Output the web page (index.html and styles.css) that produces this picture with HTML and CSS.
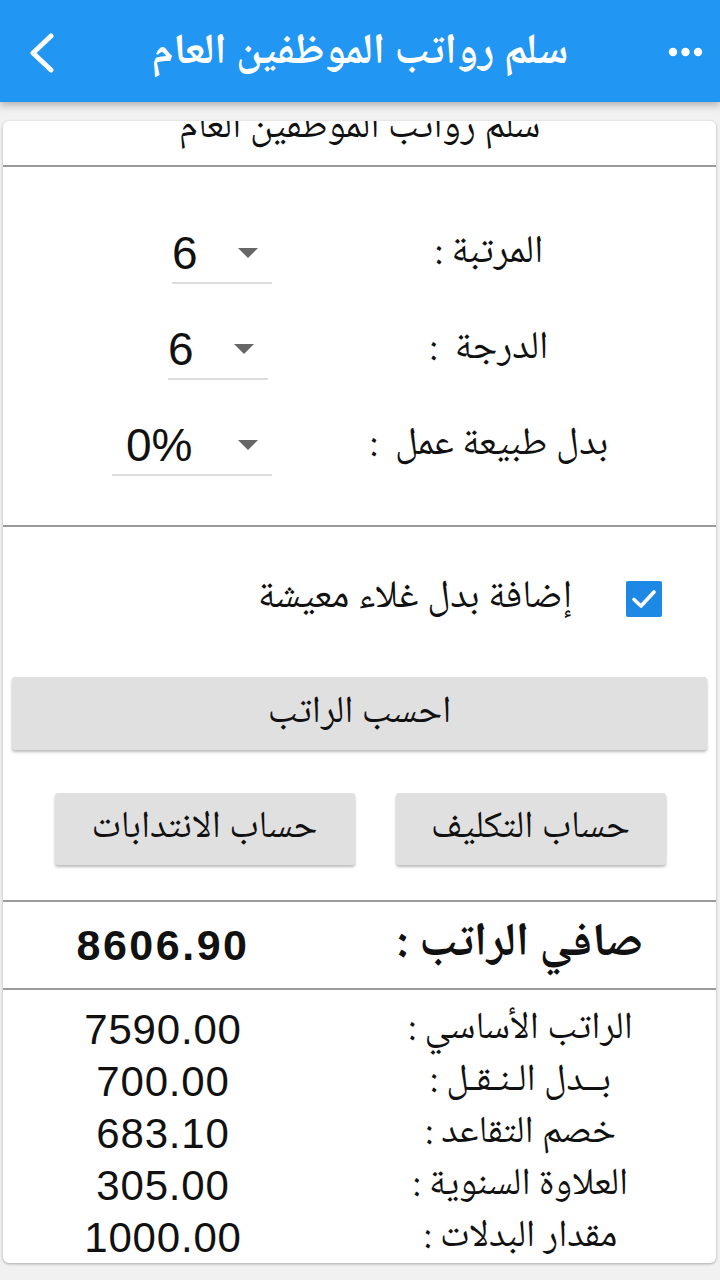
FILE: index.html
```html
<!DOCTYPE html>
<html lang="ar">
<head>
<meta charset="utf-8">
<title>سلم رواتب الموظفين العام</title>
<link rel="stylesheet" href="styles.css">
</head>
<body>
<header class="appbar">
  <div class="bar-start">
    <svg class="back" width="30" height="40" viewBox="0 0 30 40"><path d="M23 3 L5 20 L23 37" fill="none" stroke="#fff" stroke-width="5" stroke-linecap="round" stroke-linejoin="round"/></svg>
  </div>
  <h1 class="title" dir="rtl">سلم رواتب الموظفين العام</h1>
  <div class="bar-end">
    <svg class="more" width="36" height="10" viewBox="0 0 36 10"><circle cx="5" cy="5" r="4.2" fill="#fff"/><circle cx="17.5" cy="5" r="4.2" fill="#fff"/><circle cx="30" cy="5" r="4.2" fill="#fff"/></svg>
  </div>
</header>

<main class="card">
  <div class="card-title" dir="rtl">سلم رواتب الموظفين العام</div>
  <div class="divider"></div>

  <section class="selects">
    <div class="field">
      <div class="select"><span class="value">6</span><span class="arrow"></span></div>
      <div class="label" dir="rtl">المرتبة :</div>
    </div>
    <div class="field">
      <div class="select select-shift"><span class="value">6</span><span class="arrow"></span></div>
      <div class="label" dir="rtl">الدرجة &nbsp;:</div>
    </div>
    <div class="field">
      <div class="select select-wide"><span class="value">0%</span><span class="arrow"></span></div>
      <div class="label" dir="rtl">بدل طبيعة عمل &nbsp;:</div>
    </div>
  </section>
  <div class="divider"></div>

  <section class="actions">
    <div class="check-row" dir="rtl">
      <span class="checkbox"><svg width="36" height="36" viewBox="0 0 36 36"><path d="M8 18.5 L15 25 L28 11" fill="none" stroke="#fff" stroke-width="3.6" stroke-linecap="round" stroke-linejoin="round"/></svg></span>
      <span class="check-label">إضافة بدل غلاء معيشة</span>
    </div>
    <button class="btn btn-full">احسب الراتب</button>
    <div class="btn-row" dir="rtl">
      <button class="btn btn-a">حساب التكليف</button>
      <button class="btn btn-b">حساب الانتدابات</button>
    </div>
  </section>
  <div class="divider"></div>

  <section class="net">
    <div class="num net-num">8606.90</div>
    <div class="net-label" dir="rtl">صافي الراتب :</div>
  </section>
  <div class="divider"></div>

  <section class="details">
    <div class="num">7590.00</div><div class="d-label" dir="rtl">الراتب الأساسي :</div>
    <div class="num">700.00</div><div class="d-label" dir="rtl">بــدل الـنـقـل :</div>
    <div class="num">683.10</div><div class="d-label" dir="rtl">خصم التقاعد :</div>
    <div class="num">305.00</div><div class="d-label" dir="rtl">العلاوة السنوية :</div>
    <div class="num">1000.00</div><div class="d-label" dir="rtl">مقدار البدلات :</div>
  </section>
</main>
</body>
</html>
```

FILE: styles.css
```css
html, body {
  margin: 0;
  padding: 0;
}
body {
  width: 720px;
  height: 1280px;
  overflow: hidden;
  background: #f1f1f1;
  font-family: "Noto Naskh Arabic", "Noto Sans Arabic", "DejaVu Sans", sans-serif;
  color: #111;
}

/* App bar */
.appbar {
  position: relative;
  z-index: 2;
  height: 102px;
  background: #2196f3;
  display: grid;
  grid-template-columns: 90px 1fr 90px;
  align-items: center;
  box-shadow: 0 3px 8px rgba(0, 0, 0, 0.28);
}
.bar-start {
  padding-left: 28px;
  display: flex;
  align-items: center;
  padding-top: 4px;
}
.bar-end {
  display: flex;
  justify-content: flex-end;
  padding-right: 16px;
  padding-top: 2px;
}
.title {
  margin: 0;
  text-align: center;
  color: #fff;
  font-size: 43px;
  font-weight: bold;
  line-height: 1;
  padding-top: 4px;
  white-space: nowrap;
}

/* Card */
.card {
  margin: 19px 4px 0 3px;
  height: 1142px;
  background: #fff;
  border-radius: 6px;
  box-shadow: 0 1px 3px rgba(0, 0, 0, 0.3);
  overflow: hidden;
}
.card-title {
  height: 44px;
  text-align: center;
  font-size: 39px;
  line-height: 40px;
  position: relative;
  top: -12px;
  white-space: nowrap;
}
.divider {
  height: 2px;
  background: #9a9a9a;
}

/* Select rows */
.selects {
  padding: 57px 0 49px;
  display: flex;
  flex-direction: column;
  gap: 36px;
}
.field {
  display: grid;
  grid-template-columns: 269px 434px;
  align-items: center;
}
.select {
  justify-self: end;
  width: 100px;
  height: 60px;
  border-bottom: 2px solid #dcdcdc;
  display: flex;
  align-items: center;
  justify-content: space-between;
  padding-right: 14px;
  box-sizing: border-box;
}
.select-shift {
  margin-right: 4px;
}
.select-wide {
  width: 160px;
  padding-left: 14px;
}
.value {
  font-family: "Liberation Sans", Arial, sans-serif;
  font-size: 46px;
  line-height: 56px;
  color: #111;
}
.arrow {
  width: 0;
  height: 0;
  border-left: 10px solid transparent;
  border-right: 10px solid transparent;
  border-top: 10px solid #666;
}
.label {
  text-align: center;
  font-size: 39px;
  line-height: 56px;
  white-space: pre;
}

/* Actions */
.actions {
  padding: 53px 9px 35px;
  display: flex;
  flex-direction: column;
}
.check-row {
  display: flex;
  align-items: center;
  gap: 54px;
  padding-right: 45px;
  height: 38px;
}
.checkbox {
  width: 36px;
  height: 36px;
  background: #1e88e5;
  border-radius: 2px;
  display: block;
  flex: none;
}
.checkbox svg {
  display: block;
}
.check-label {
  font-size: 39px;
  line-height: 38px;
  white-space: nowrap;
}
.btn {
  font-family: inherit;
  font-size: 38px;
  line-height: 1;
  color: #111;
  background: #e0e0e0;
  border: none;
  border-radius: 3px;
  box-shadow: 0 2px 3px rgba(0, 0, 0, 0.28);
  height: 72px;
  padding: 0;
  white-space: nowrap;
}
.btn-full {
  margin-top: 59px;
  width: 100%;
  height: 73px;
}
.btn-row {
  margin-top: 43px;
  display: flex;
  justify-content: center;
  gap: 41px;
  padding-left: 1px;
}
.btn-a {
  width: 270px;
}
.btn-b {
  width: 300px;
}

/* Net */
.net {
  height: 86px;
  display: grid;
  grid-template-columns: 320px 1fr;
  align-items: center;
}
.num {
  font-family: "Liberation Sans", Arial, sans-serif;
  text-align: center;
  font-size: 42px;
  letter-spacing: 0.8px;
  line-height: 52px;
}
.net-num {
  font-weight: bold;
  font-size: 43px;
  letter-spacing: 2.5px;
}
.net-label {
  text-align: center;
  font-weight: bold;
  font-size: 47px;
  line-height: 60px;
  white-space: nowrap;
}

/* Details */
.details {
  padding-top: 14px;
  display: grid;
  grid-template-columns: 320px 1fr;
  grid-auto-rows: 52px;
  align-items: center;
}
.d-label {
  text-align: center;
  font-size: 38px;
  line-height: 52px;
  padding-left: 2px;
  white-space: nowrap;
}
```
